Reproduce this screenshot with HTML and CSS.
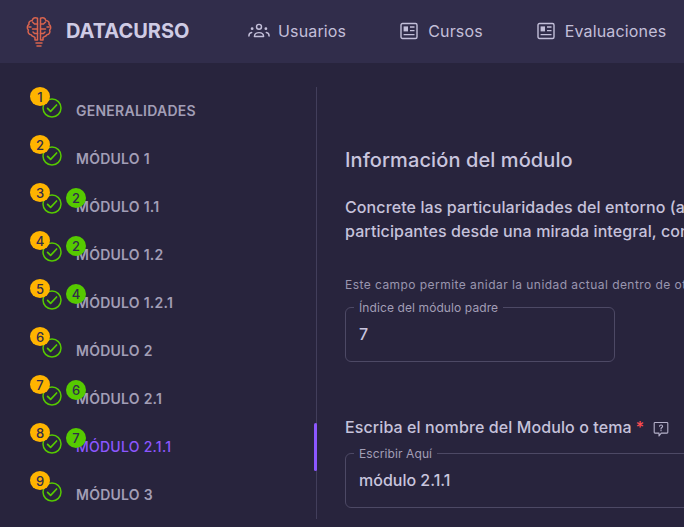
FILE: index.html
```html
<!DOCTYPE html>
<html lang="es">
<head>
  <meta charset="UTF-8">
  <title>Datacurso</title>
  <link rel="stylesheet" href="styles.css">
</head>
<body>
  <svg class="defs" width="0" height="0">
    <symbol id="check" viewBox="0 0 20 20">
      <circle cx="10" cy="10" r="9" fill="none" stroke="currentColor" stroke-width="1.5"/>
      <path d="M5.6 10.400l3 3 6-6.400" fill="none" stroke="currentColor" stroke-width="1.700" stroke-linecap="round" stroke-linejoin="round"/>
    </symbol>
    <symbol id="news" viewBox="0 0 18 18">
      <rect x="1" y="1.500" width="16" height="15" rx="1.500" fill="none" stroke="currentColor" stroke-width="1.400"/>
      <rect x="3.600" y="4.400" width="4.400" height="5" fill="currentColor"/>
      <path d="M10 5h4.500M10 8.600h4.500M3.600 12.600h10.900" fill="none" stroke="currentColor" stroke-width="1.400"/>
    </symbol>
  </svg>

  <header class="topbar">
    <div class="brand">
      <svg class="brand-icon" viewBox="0 0 26 32" fill="none" stroke="#d9644f" stroke-width="1.500" stroke-linejoin="round" stroke-linecap="round">
        <path d="M11.500 2.200C9 1 6.600 2.200 6.200 4.400 3.800 4.400 2.400 6.400 3 8.400 1 9.600.7 12.400 2.400 14c-1 2.200.4 4.700 2.800 4.800.8 1.600 2.800 1.800 3.800 2.700v2.500h2.500z"/>
        <path d="M14.500 2.200C17 1 19.400 2.200 19.800 4.400c2.400 0 3.800 2 3.200 4 2 1.200 2.300 4 .6 5.600 1 2.200-.4 4.700-2.800 4.800-.8 1.600-2.800 1.800-3.800 2.700v2.500h-2.500z"/>
        <path d="M11.500 8H8.500L6.500 6M11.500 13H6.500M2.800 11H5M11.500 17.500H8.500L7 16M14.500 8h3l2-2M14.500 13h5M23.200 11H21M14.500 17.500h3l1.500-1.500"/>
        <path d="M10 27h6M11 30h4"/>
      </svg>
      <span class="brand-name">DATACURSO</span>
    </div>
    <nav class="menu">
      <a class="menu-item menu-users">
        <svg class="menu-icon menu-icon-wide" viewBox="0 0 24 18" fill="currentColor" stroke="currentColor" stroke-width="1.200" stroke-linecap="round">
          <circle cx="12" cy="5" r="2.700" fill="none" stroke-width="1.600"/>
          <path d="M7 15.500c0-5.600 10-5.600 10 0z" fill="none" stroke-width="1.600" stroke-linejoin="round"/>
          <circle cx="4.500" cy="7" r="1.500" stroke="none"/>
          <circle cx="19.500" cy="7" r="1.500" stroke="none"/>
          <path d="M1 15c0-2.200 1-3.600 3-3.800M23 15c0-2.200-1-3.600-3-3.800" fill="none" stroke-width="1.600"/>
        </svg>
        Usuarios
      </a>
      <a class="menu-item">
        <svg class="menu-icon"><use href="#news"/></svg>
        Cursos
      </a>
      <a class="menu-item">
        <svg class="menu-icon"><use href="#news"/></svg>
        Evaluaciones
      </a>
    </nav>
  </header>

  <div class="layout">
    <aside class="sidebar">
      <ul class="tree">
        <li class="row">
          <span class="badge badge-index">1</span>
          <svg class="check"><use href="#check"/></svg>
          <span class="row-label">GENERALIDADES</span>
        </li>
        <li class="row">
          <span class="badge badge-index">2</span>
          <svg class="check"><use href="#check"/></svg>
          <span class="row-label">MÓDULO 1</span>
        </li>
        <li class="row">
          <span class="badge badge-index">3</span>
          <svg class="check"><use href="#check"/></svg>
          <span class="badge badge-parent">2</span>
          <span class="row-label">MÓDULO 1.1</span>
        </li>
        <li class="row">
          <span class="badge badge-index">4</span>
          <svg class="check"><use href="#check"/></svg>
          <span class="badge badge-parent">2</span>
          <span class="row-label">MÓDULO 1.2</span>
        </li>
        <li class="row">
          <span class="badge badge-index">5</span>
          <svg class="check"><use href="#check"/></svg>
          <span class="badge badge-parent">4</span>
          <span class="row-label">MÓDULO 1.2.1</span>
        </li>
        <li class="row">
          <span class="badge badge-index">6</span>
          <svg class="check"><use href="#check"/></svg>
          <span class="row-label">MÓDULO 2</span>
        </li>
        <li class="row">
          <span class="badge badge-index">7</span>
          <svg class="check"><use href="#check"/></svg>
          <span class="badge badge-parent">6</span>
          <span class="row-label">MÓDULO 2.1</span>
        </li>
        <li class="row row-active">
          <span class="badge badge-index">8</span>
          <svg class="check"><use href="#check"/></svg>
          <span class="badge badge-parent">7</span>
          <span class="row-label">MÓDULO 2.1.1</span>
        </li>
        <li class="row">
          <span class="badge badge-index">9</span>
          <svg class="check"><use href="#check"/></svg>
          <span class="row-label">MÓDULO 3</span>
        </li>
      </ul>
    </aside>

    <main class="content">
      <h2 class="title">Información del módulo</h2>
      <p class="intro">Concrete las particularidades del entorno (a<br>participantes desde una mirada integral, con</p>
      <p class="hint">Este campo permite anidar la unidad actual dentro de otra</p>
      <fieldset class="field field-short">
        <legend>Índice del módulo padre</legend>
        <div class="field-value">7</div>
      </fieldset>
      <h3 class="question">
        Escriba el nombre del Modulo o tema <span class="required">*</span>
        <svg class="help" viewBox="0 0 16 16" fill="none" stroke="currentColor" stroke-width="1.100" stroke-linejoin="round">
          <path d="M2 1.500h12a.8.8 0 0 1 .8.8v9a.8.8 0 0 1-.8.8H8.200L6 15v-2.900H2a.8.8 0 0 1-.8-.8v-9a.8.8 0 0 1 .8-.8z"/>
          <path d="M6.500 5.200c.2-1.600 3-1.600 3.100 0 0 1.300-1.600 1.200-1.600 2.500M8 9.100v.6" stroke-linecap="round"/>
        </svg>
      </h3>
      <fieldset class="field field-long">
        <legend>Escribir Aquí</legend>
        <div class="field-value">módulo 2.1.1</div>
      </fieldset>
    </main>
  </div>
</body>
</html>
```

FILE: styles.css
```css
/*
 *  Page
 */
html, body {
  margin: 0;
  height: 100%;
  overflow: hidden;
}
body {
  background: #28243d;
  color: #cfcbe4;
  font-family: Inter, "Liberation Sans", sans-serif;
}
.defs {
  display: block;
  height: 0;
}

/*
 *  Top bar
 */
.topbar {
  display: flex;
  align-items: center;
  height: 61px;
  padding-left: 26px;
  padding-bottom: 2px;
  background: #312d4b;
  white-space: nowrap;
}
.brand {
  display: flex;
  align-items: center;
  width: 222px;
}
.brand-icon {
  width: 26px;
  height: 32px;
  margin-top: 3px;
  margin-right: 14px;
}
.brand-name {
  font-size: 20px;
  font-weight: 700;
  color: #cfcbe4;
}
.menu {
  display: flex;
  gap: 54px;
}
.menu-item {
  display: flex;
  align-items: center;
  gap: 10px;
  font-size: 16px;
  letter-spacing: 0.15px;
  color: #c3bfd9;
}
.menu-users {
  gap: 8px;
}
.menu-icon {
  width: 18px;
  height: 18px;
}
.menu-icon-wide {
  width: 22px;
  height: 17px;
}

/*
 *  Module tree
 */
.layout {
  display: flex;
  padding-top: 24px;
}
.sidebar {
  flex: none;
  width: 316px;
  height: 432px;
  border-right: 1px solid #423e5b;
}
.tree {
  margin: 0;
  padding: 0;
  list-style: none;
}
.row {
  position: relative;
  display: flex;
  align-items: center;
  height: 48px;
  padding-left: 42px;
  color: #a29eb6;
  font-size: 14px;
  font-weight: 600;
  letter-spacing: 0.25px;
}
.row-active {
  color: #8c57ff;
  font-weight: 500;
}
.row-active::after {
  content: "";
  position: absolute;
  top: 0;
  right: -1px;
  width: 3px;
  height: 48px;
  background: #8c57ff;
  border-radius: 2px;
}
.check {
  width: 20px;
  height: 20px;
  margin-top: -7px;
  color: #56ca00;
}
.row-label {
  margin-left: 14px;
  margin-bottom: 1px;
}
.badge {
  position: absolute;
  z-index: 1;
  display: flex;
  align-items: center;
  justify-content: center;
  width: 20px;
  height: 20px;
  border-radius: 50%;
  color: #312d4b;
  font-size: 13px;
  font-weight: 500;
  letter-spacing: 0;
}
.badge-index {
  top: 0;
  left: 30px;
  height: 19px;
  background: #ffb400;
}
.badge-parent {
  top: 5px;
  left: 66px;
  background: #56ca00;
}

/*
 *  Form
 */
.content {
  flex: none;
  width: 600px;
  padding-left: 28px;
  white-space: nowrap;
}
.title {
  margin: 0;
  padding-top: 61px;
  font-size: 20px;
  line-height: 24px;
  font-weight: 500;
  letter-spacing: 0.1px;
  color: #c9c5de;
}
.intro {
  margin: 23px 0 0;
  font-size: 16px;
  line-height: 24px;
  font-weight: 500;
  letter-spacing: 0.1px;
  color: #c6c2db;
}
.hint {
  margin: 33px 0 0;
  font-size: 12px;
  line-height: 18px;
  letter-spacing: 0.45px;
  color: #9a96af;
}
.field {
  margin: 6px 0 0;
  padding: 0 13px;
  border: 1px solid #4d4965;
  border-radius: 6px;
  box-sizing: border-box;
}
.field legend {
  padding: 0 5px;
  margin-left: -5px;
  font-size: 12px;
  line-height: 15px;
  letter-spacing: 0.1px;
  color: #a29eb6;
}
.field-short {
  width: 270px;
  height: 62px;
}
.field-long {
  width: 420px;
  height: 62px;
  margin-top: 7px;
}
.field-value {
  padding-top: 7px;
  font-size: 16px;
  line-height: 24px;
  font-weight: 500;
  color: #c9c5de;
}
.question {
  display: flex;
  align-items: center;
  margin: 53px 0 0;
  font-size: 16px;
  line-height: 24px;
  font-weight: 500;
  letter-spacing: 0.1px;
  color: #c6c2db;
}
.required {
  margin-left: 4px;
  color: #ff4c51;
}
.help {
  width: 16px;
  height: 16px;
  margin-left: 9px;
  margin-top: 3px;
  color: #b5b1ca;
}
```
